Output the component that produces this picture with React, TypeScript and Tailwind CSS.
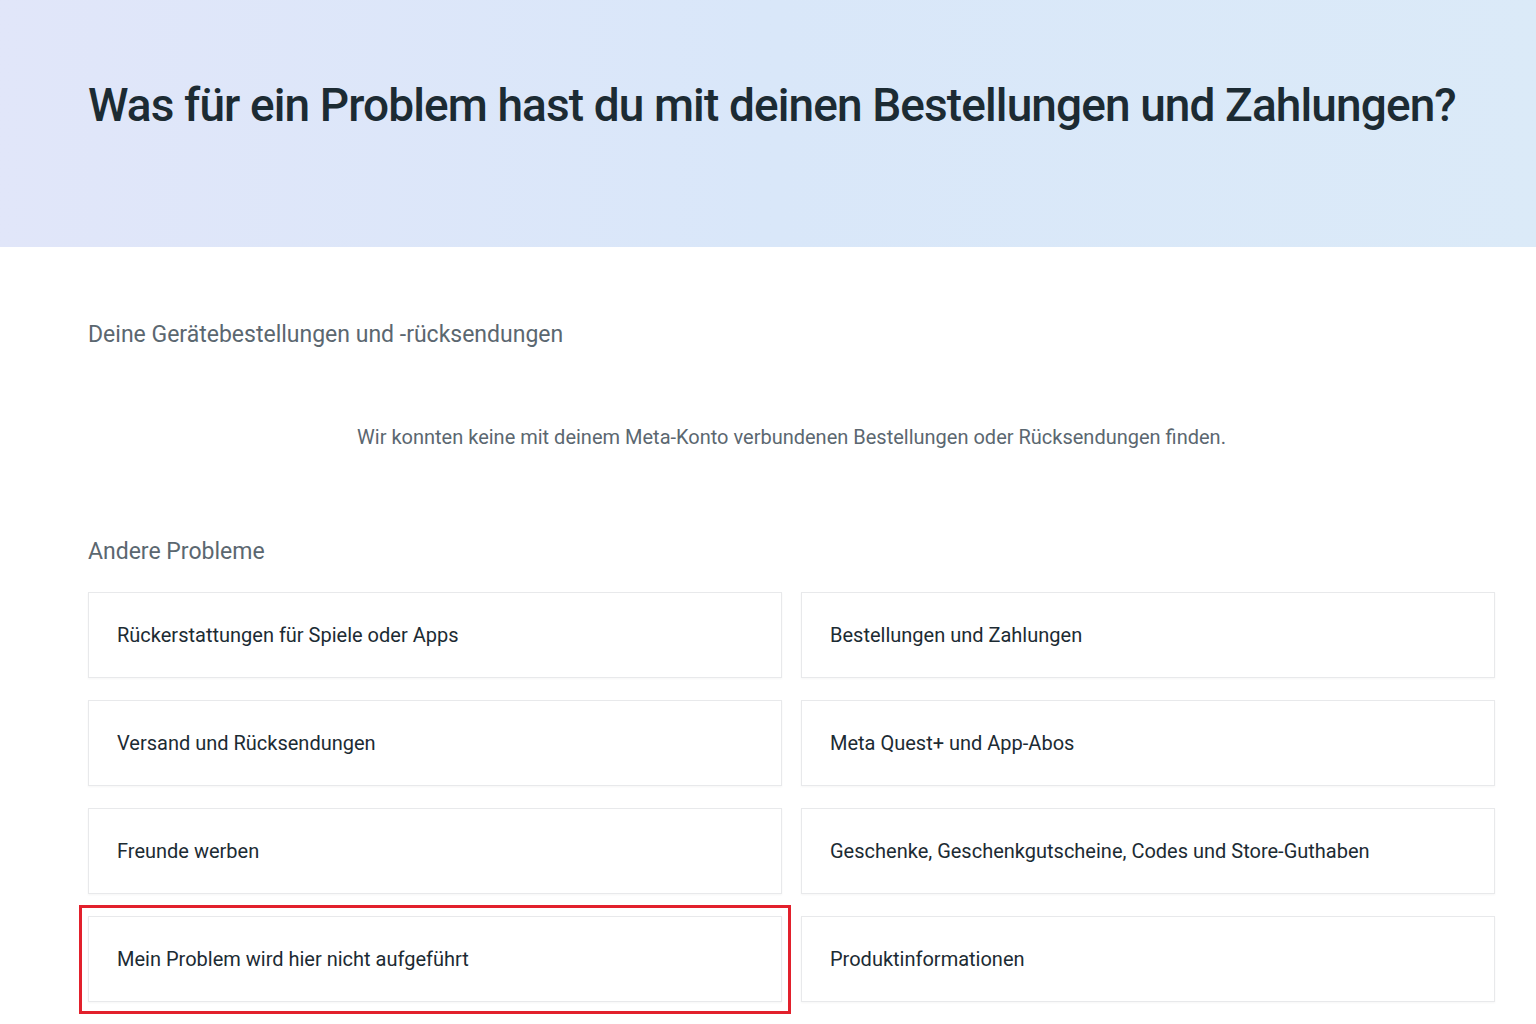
import React from "react";

const options: string[] = [
  "Rückerstattungen für Spiele oder Apps",
  "Bestellungen und Zahlungen",
  "Versand und Rücksendungen",
  "Meta Quest+ und App-Abos",
  "Freunde werben",
  "Geschenke, Geschenkgutscheine, Codes und Store-Guthaben",
  "Mein Problem wird hier nicht aufgeführt",
  "Produktinformationen",
];

function OptionCard({ label, marked }: { label: string; marked?: boolean }) {
  return (
    <div className="relative">
      <button className="flex h-[86px] w-full items-center border border-[#e8e9eb] bg-white pl-[28px] text-left text-[20px] text-[#1c2b33] shadow-[0_1px_2px_rgba(0,0,0,0.04)]">
        {label}
      </button>
      {marked && (
        <div className="pointer-events-none absolute -left-[9px] -right-[9px] -top-[11px] -bottom-[12px] border-[3px] border-[#e2202c]" />
      )}
    </div>
  );
}

export default function App() {
  return (
    <div className="min-h-screen bg-white" style={{ fontFamily: "Roboto, 'Noto Sans', sans-serif" }}>
      <header className="h-[247px] bg-gradient-to-r from-[#e1e6f9] via-[#d9e7f9] to-[#dbeaf8] pl-[88px] pt-[76px]">
        <h1 className="whitespace-nowrap text-[46px] leading-[58px] font-medium tracking-[-0.9px] text-[#1c2b33]">
          Was für ein Problem hast du mit deinen Bestellungen und Zahlungen?
        </h1>
      </header>

      <main className="pl-[88px] pr-[41px]">
        <h2 className="mt-[72px] text-[23px] leading-[32px] text-[#5b6770]">
          Deine Gerätebestellungen und -rücksendungen
        </h2>
        <p className="mt-[72px] text-center text-[20px] leading-[28px] text-[#5b6770]">
          Wir konnten keine mit deinem Meta-Konto verbundenen Bestellungen oder Rücksendungen finden.
        </p>

        <h2 className="mt-[85px] text-[23px] leading-[32px] text-[#5b6770]">Andere Probleme</h2>

        <div className="mt-[24px] grid grid-cols-2 gap-x-[19px] gap-y-[22px]">
          {options.map((o, i) => (
            <OptionCard key={o} label={o} marked={i === 6} />
          ))}
        </div>
      </main>
    </div>
  );
}
